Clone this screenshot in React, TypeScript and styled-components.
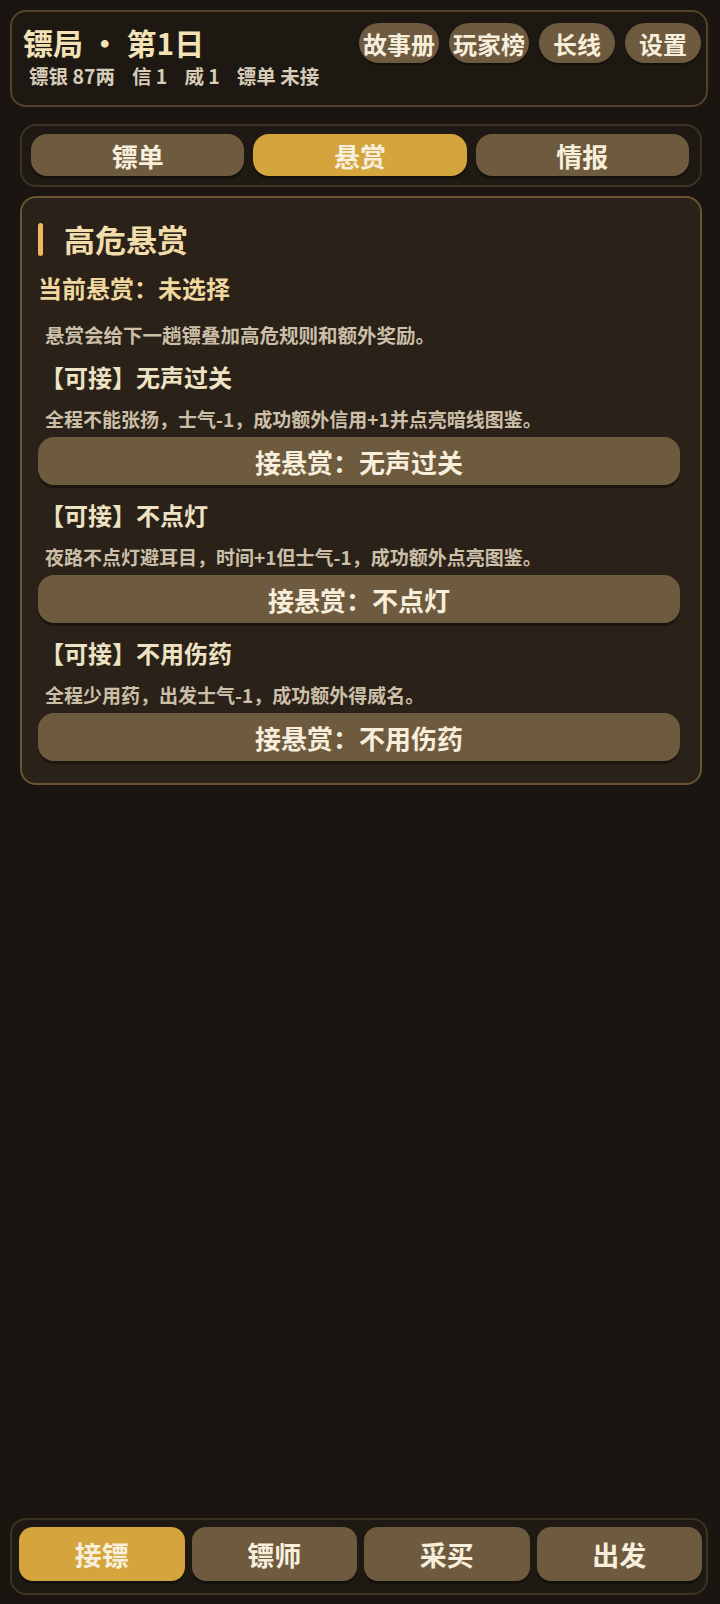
import React, { useState } from 'react';
import styled, { createGlobalStyle, css } from 'styled-components';

const GlobalStyle = createGlobalStyle`
  html, body {
    margin: 0;
    padding: 0;
    background: #1a1510;
  }
  body {
    font-family: 'Noto Sans CJK SC', 'Noto Sans', sans-serif;
    color: #f2e6cc;
  }
  * {
    box-sizing: border-box;
  }
`;

type Bounty = {
  name: string;
  desc: string;
};

const bounties: Bounty[] = [
  { name: '无声过关', desc: '全程不能张扬，士气-1，成功额外信用+1并点亮暗线图鉴。' },
  { name: '不点灯', desc: '夜路不点灯避耳目，时间+1但士气-1，成功额外点亮图鉴。' },
  { name: '不用伤药', desc: '全程少用药，出发士气-1，成功额外得威名。' },
];

const topLinks = ['故事册', '玩家榜', '长线', '设置'];
const tabs = ['镖单', '悬赏', '情报'];
const navs = ['接镖', '镖师', '采买', '出发'];

const App = () => {
  const [tab, setTab] = useState<string>('悬赏');
  const [nav, setNav] = useState<string>('接镖');

  return (
    <>
      <GlobalStyle />
      <Page>
        <Header>
          <TitleBlock>
            <Title>镖局 · 第1日</Title>
            <Stats>
              <span>镖银 87两</span>
              <span>信 1</span>
              <span>威 1</span>
              <span>镖单 未接</span>
            </Stats>
          </TitleBlock>
          <LinkRow>
            {topLinks.map((l) => (
              <LinkButton key={l}>{l}</LinkButton>
            ))}
          </LinkRow>
        </Header>

        <TabBar>
          {tabs.map((t) => (
            <TabButton key={t} active={tab === t} onClick={() => setTab(t)}>
              {t}
            </TabButton>
          ))}
        </TabBar>

        <Card>
          <CardHead>
            <Bar />
            <CardTitle>高危悬赏</CardTitle>
          </CardHead>
          <Current>当前悬赏：未选择</Current>
          <Hint>悬赏会给下一趟镖叠加高危规则和额外奖励。</Hint>
          {bounties.map((b) => (
            <Item key={b.name}>
              <ItemTitle>【可接】{b.name}</ItemTitle>
              <ItemDesc>{b.desc}</ItemDesc>
              <AcceptButton>接悬赏：{b.name}</AcceptButton>
            </Item>
          ))}
        </Card>

        <BottomNav>
          {navs.map((n) => (
            <NavButton key={n} active={nav === n} onClick={() => setNav(n)}>
              {n}
            </NavButton>
          ))}
        </BottomNav>
      </Page>
    </>
  );
};

export default App;

const Page = styled.div`
  width: 720px;
  min-height: 100vh;
  padding: 10px 12px 9px 10px;
  display: flex;
  flex-direction: column;
`;

const Header = styled.div`
  height: 97px;
  border: 2px solid #54432a;
  border-radius: 16px;
  background: #1e1812;
  padding: 10px 5px 0 11px;
  display: flex;
  justify-content: space-between;
  align-items: flex-start;
`;

const TitleBlock = styled.div`
  display: flex;
  flex-direction: column;
`;

const Title = styled.div`
  font-size: 30px;
  font-weight: 700;
  line-height: 40px;
  color: #f3e2b6;
`;

const Stats = styled.div`
  display: flex;
  gap: 17px;
  margin: 3px 0 0 6px;
  font-size: 19.5px;
  font-weight: 700;
  line-height: 22px;
  color: #d6ccb8;
`;

const LinkRow = styled.div`
  display: flex;
  gap: 10px;
  padding-top: 1px;
`;

const LinkButton = styled.button`
  height: 40px;
  min-width: 76px;
  padding: 0 4px;
  border: none;
  border-radius: 20px;
  background: #6d5a3f;
  box-shadow: 0 2px 0 rgba(0, 0, 0, 0.35);
  font-family: inherit;
  font-size: 24px;
  font-weight: 700;
  color: #f7eedb;
  cursor: pointer;
`;

const TabBar = styled.div`
  margin: 17px 6px 0 10px;
  height: 63px;
  border: 2px solid #3e3222;
  border-radius: 16px;
  background: #1f1913;
  padding: 8px 11px 9px 9px;
  display: grid;
  grid-template-columns: repeat(3, 1fr);
  gap: 9px;
`;

const activeFill = css`
  background: #d3a53c;
`;

const TabButton = styled.button<{ active: boolean }>`
  border: none;
  border-radius: 16px;
  background: #6d5a3f;
  ${({ active }) => active && activeFill}
  box-shadow: 0 3px 0 rgba(0, 0, 0, 0.35);
  font-family: inherit;
  font-size: 26px;
  font-weight: 700;
  color: #f7eedb;
  cursor: pointer;
`;

const Card = styled.div`
  margin: 9px 6px 0 10px;
  border: 2px solid #6a5434;
  border-radius: 16px;
  background: #2a2118;
  padding: 24px 20px 22px 16px;
  display: flex;
  flex-direction: column;
`;

const CardHead = styled.div`
  display: flex;
  align-items: center;
  gap: 21px;
`;

const Bar = styled.div`
  width: 5px;
  height: 33px;
  border-radius: 3px;
  background: #f1b863;
`;

const CardTitle = styled.div`
  font-size: 31px;
  font-weight: 700;
  line-height: 34px;
  color: #f2dcab;
`;

const Current = styled.div`
  margin-top: 17px;
  font-size: 24px;
  font-weight: 700;
  line-height: 30px;
  color: #f0d7a0;
`;

const Hint = styled.div`
  margin: 20px 0 0 7px;
  font-size: 19.5px;
  font-weight: 700;
  line-height: 24px;
  color: #cbbfa8;
`;

const Item = styled.div`
  display: flex;
  flex-direction: column;
  margin-top: 15px;
`;

const ItemTitle = styled.div`
  margin-left: 2px;
  font-size: 24px;
  font-weight: 700;
  line-height: 30px;
  color: #eee2c5;
`;

const ItemDesc = styled.div`
  margin: 15px 0 0 7px;
  font-size: 19px;
  font-weight: 700;
  line-height: 24px;
  color: #cbbfa8;
`;

const AcceptButton = styled.button`
  margin-top: 6px;
  height: 48px;
  border: none;
  border-radius: 16px;
  background: #6d5a3f;
  box-shadow: 0 3px 0 rgba(0, 0, 0, 0.35);
  font-family: inherit;
  font-size: 26px;
  font-weight: 700;
  color: #f7eedb;
  cursor: pointer;
`;

const BottomNav = styled.div`
  margin-top: auto;
  height: 77px;
  border: 2px solid #3e3222;
  border-radius: 16px;
  background: #1f1913;
  padding: 7px 4px 12px 7px;
  display: grid;
  grid-template-columns: repeat(4, 1fr);
  gap: 7px;
`;

const NavButton = styled.button<{ active: boolean }>`
  border: none;
  border-radius: 14px;
  background: #6d5a3f;
  ${({ active }) => active && activeFill}
  box-shadow: 0 3px 0 rgba(0, 0, 0, 0.35);
  font-family: inherit;
  font-size: 27px;
  font-weight: 700;
  color: #f7eedb;
  cursor: pointer;
`;
